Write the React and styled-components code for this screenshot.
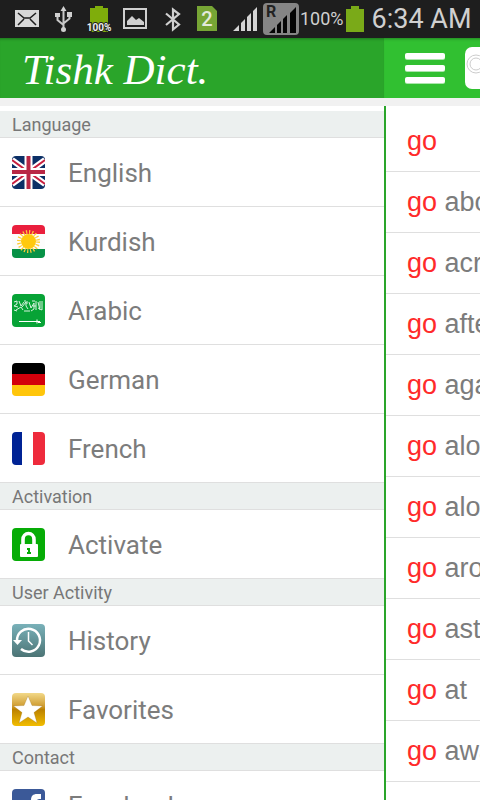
import React from 'react'
import styled, { createGlobalStyle } from 'styled-components'

const sections = [
    {
        title: 'Language',
        items: [
            { label: 'English', icon: 'english' },
            { label: 'Kurdish', icon: 'kurdish' },
            { label: 'Arabic', icon: 'arabic' },
            { label: 'German', icon: 'german' },
            { label: 'French', icon: 'french' },
        ],
    },
    {
        title: 'Activation',
        items: [{ label: 'Activate', icon: 'lock' }],
    },
    {
        title: 'User Activity',
        items: [
            { label: 'History', icon: 'history' },
            { label: 'Favorites', icon: 'star' },
        ],
    },
    {
        title: 'Contact',
        items: [{ label: 'Facebook', icon: 'facebook' }],
    },
]

const words = [
    '',
    'about',
    'across',
    'after',
    'against',
    'alone',
    'along',
    'around',
    'astray',
    'at',
    'away',
]

const artwork = {
    english: (
        <>
            <rect width="33" height="33" fill="#0b2f66" />
            <path d="M0 4 33 28M33 4 0 28" stroke="#fff" strokeWidth="6" />
            <path d="M0 4 33 28M33 4 0 28" stroke="#c8203f" strokeWidth="2" />
            <path d="M16.5 0V33M0 16H33" stroke="#fff" strokeWidth="8" />
            <path d="M16.5 0V33M0 16H33" stroke="#b92745" strokeWidth="4" />
        </>
    ),
    kurdish: (
        <>
            <rect width="33" height="33" fill="#fcfcfc" />
            <rect width="33" height="9" fill="#ea1f3d" />
            <rect y="24" width="33" height="9" fill="#079247" />
            <circle
                cx="16.5"
                cy="16.5"
                r="9.5"
                fill="none"
                stroke="#fc3"
                strokeWidth="4"
                strokeDasharray="1.2 1.8"
            />
            <circle cx="16.5" cy="16.5" r="7.5" fill="#ffc90e" />
        </>
    ),
    arabic: (
        <>
            <rect width="33" height="33" fill="#07a336" />
            <path
                d="M2 8l3-1v3l-3 2 4 1M4 16l5-3 2 3M7 7l2 5 3-4M10 13l4-5v4l2 3M12 7h2M15 7v3M17 8l2 6 3-5v6l-3 2M20 7h3M24 7v9M26 8l2 8M28 7v7M30 7v9l-4-2M2 16l3 1M12 17h6M21 12h3"
                fill="none"
                stroke="#d9f2df"
                strokeWidth="1"
            />
            <path d="M7 27.5H28M25 25.5v4M26 28.5h3" stroke="#fff" fill="none" />
        </>
    ),
    german: (
        <>
            <rect width="33" height="11" />
            <rect y="11" width="33" height="11" fill="#d3000b" />
            <rect y="22" width="33" height="11" fill="#ffc60b" />
        </>
    ),
    french: (
        <>
            <rect width="33" height="33" fill="#fff" />
            <rect width="10" height="33" fill="#002395" />
            <rect x="21" width="12" height="33" fill="#ee2b3c" />
        </>
    ),
    lock: (
        <>
            <rect width="33" height="33" fill="#06ac06" />
            <path
                d="M11 17V11.5a5.5 6 0 0 1 11 0V17"
                fill="none"
                stroke="#fff"
                strokeWidth="3.6"
            />
            <rect x="8" y="16" width="18" height="13" rx="1" fill="#fff" />
            <path d="M15 20h3v4h1v2h-4v-2h1v-2h-1z" fill="#06ac06" />
        </>
    ),
    history: (
        <>
            <defs>
                <linearGradient id="teal" x2="0" y2="1">
                    <stop stopColor="#79b1b9" />
                    <stop offset="1" stopColor="#4c7475" />
                </linearGradient>
            </defs>
            <rect width="33" height="33" fill="url(#teal)" />
            <path
                d="M5 17A11.5 11.5 0 1 1 9 25"
                fill="none"
                stroke="#fff"
                strokeWidth="2.5"
            />
            <path d="M1 16h9l-4.5 5z" fill="#fff" />
            <path d="M16.5 8v9l4 4" fill="none" stroke="#fff" strokeWidth="1.5" />
        </>
    ),
    star: (
        <>
            <defs>
                <linearGradient id="gold" x2="0" y2="1">
                    <stop stopColor="#f2d888" />
                    <stop offset=".4" stopColor="#cf9c30" />
                    <stop offset=".5" stopColor="#bb8100" />
                    <stop offset="1" stopColor="#f2bd00" />
                </linearGradient>
            </defs>
            <rect width="33" height="33" fill="url(#gold)" />
            <path
                d="M16 3l4 9.5 10.5.5-8.5 6.5 3 10.5-9-6-9 6 3-10.5L1.500 13l10.5-.5z"
                fill="#fff"
                stroke="#8f6412"
                strokeOpacity=".4"
                strokeWidth=".6"
            />
        </>
    ),
    facebook: (
        <>
            <rect width="33" height="33" fill="#3b5998" />
            <path
                d="M29 5h-4c-4 0-6 2-6 6v3h-4v5h4v14h6V19h4v-5h-4v-2c0-2 1-2 4-2z"
                fill="#fff"
            />
        </>
    ),
}

function StatusBar() {
    return (
        <Status>
            <StatusIcon viewBox="0 0 36 38">
                <rect x="6" y="10" width="24" height="17" fill="#d8d8d8" />
                <path
                    d="M9 13l6 5h6l6-5M9 25l6-6M27 25l-6-6"
                    fill="none"
                    stroke="#1e1e1e"
                    strokeWidth="1.5"
                />
            </StatusIcon>
            <StatusIcon viewBox="0 0 36 38">
                <path
                    d="M18.5 9v20M12.5 15v5l6 5M24.5 15v3.5l-6 5"
                    fill="none"
                    stroke="#c9c9c9"
                    strokeWidth="2"
                />
                <path
                    d="M18.5 6l3 5h-6zM10 13h5v4h-5zM22 12h5v5h-5z"
                    fill="#d0d0d0"
                />
                <circle cx="18.5" cy="29.5" r="2.5" fill="#d0d0d0" />
            </StatusIcon>
            <StatusIcon viewBox="0 0 36 38">
                <path d="M9 8h5V6h8v2h5v24H9z" fill="#7fad0b" />
                <BatteryText x="18" y="31" textAnchor="middle">
                    100%
                </BatteryText>
            </StatusIcon>
            <StatusIcon viewBox="0 0 36 38">
                <rect
                    x="7"
                    y="9"
                    width="22"
                    height="19"
                    fill="none"
                    stroke="#d0d0d0"
                    strokeWidth="2"
                />
                <path d="M10 25v-4l5-5 4 4 3-2 5 4v3z" fill="#d0d0d0" />
            </StatusIcon>
            <StatusIcon viewBox="0 0 36 38">
                <path
                    d="M13 13.5l13 11-6 5V9.500l6 4.5-13 11"
                    fill="none"
                    stroke="#d0d0d0"
                    strokeWidth="2.2"
                />
            </StatusIcon>
            <StatusIcon viewBox="0 0 36 38">
                <path d="M8 6h15l5 5v20H8z" fill="#77a535" />
                <SimText x="18" y="26" textAnchor="middle">
                    2
                </SimText>
            </StatusIcon>
            <StatusIcon viewBox="0 0 36 38">
                <path
                    d="M8 31l6-6v6zM16 31v-8l4-4v12zM22 31V17l4-4v18zM28 31V11l4-4v24z"
                    fill="#d4d4d4"
                />
            </StatusIcon>
            <StatusIcon viewBox="0 0 36 38">
                <rect x="2" y="3" width="36" height="32" rx="4" fill="#858585" />
                <path
                    d="M8 33l6-6v6zM16 33v-8l4-4v12zM22 33V19l4-4v18zM29 33V13l6-6v26z"
                    fill="#050505"
                />
                <RoamingText x="5" y="17">
                    R
                </RoamingText>
            </StatusIcon>
            <Percent>100%</Percent>
            <BatteryIcon viewBox="0 0 18 26">
                <path d="M0 3h5V0h8v3h5v23H0z" fill="#7aaa18" />
            </BatteryIcon>
            <Clock>6:34 AM</Clock>
        </Status>
    )
}

function App() {
    return (
        <>
            <GlobalStyle />
            <Screen>
                <StatusBar />
                <Columns>
                    <Drawer>
                        <DrawerHeader>
                            <Logo>Tishk Dict.</Logo>
                        </DrawerHeader>
                        <DrawerBody>
                            {sections.map(section => (
                                <section key={section.title}>
                                    <SectionTitle>{section.title}</SectionTitle>
                                    {section.items.map(item => (
                                        <MenuItem key={item.label} href="#">
                                            <MenuIcon viewBox="0 0 33 33">
                                                {artwork[item.icon]}
                                            </MenuIcon>
                                            <MenuLabel>{item.label}</MenuLabel>
                                        </MenuItem>
                                    ))}
                                </section>
                            ))}
                        </DrawerBody>
                    </Drawer>

                    <Page>
                        <PageHeader>
                            <MenuButton aria-label="Menu">
                                <Bar />
                                <Bar />
                                <Bar />
                            </MenuButton>
                            <SearchBox>
                                <SearchIcon viewBox="0 0 24 24">
                                    <circle cx="11" cy="11" r="9" />
                                    <circle cx="11" cy="11" r="6" />
                                    <path d="M18 18l5 5" />
                                </SearchIcon>
                                <SearchInput type="text" aria-label="Search" />
                            </SearchBox>
                        </PageHeader>
                        <WordList>
                            {words.map(word => (
                                <Word key={word}>
                                    <Match>go</Match> {word}
                                </Word>
                            ))}
                        </WordList>
                    </Page>
                </Columns>
            </Screen>
        </>
    )
}

const GlobalStyle = createGlobalStyle`
    * {
        box-sizing: border-box;
    }
    body {
        margin: 0;
        background: #fff;
        font-family: Roboto, 'Liberation Sans', sans-serif;
    }
`

const Screen = styled.div`
    height: 100vh;
    display: flex;
    flex-direction: column;
    overflow: hidden;
`

const Status = styled.div`
    flex: none;
    height: 38px;
    padding-left: 9px;
    display: flex;
    align-items: center;
    background: #1e1e1e;
    color: #d0d0d0;
`

const StatusIcon = styled.svg`
    flex: none;
    width: 36px;
    height: 38px;
    overflow: visible;
`

const BatteryText = styled.text`
    font-size: 10px;
    font-weight: bold;
    fill: #eee;
    stroke: #1e1e1e;
    stroke-width: 2px;
    paint-order: stroke;
`

const SimText = styled.text`
    font-size: 20px;
    font-weight: 500;
    fill: #e4eadb;
`

const RoamingText = styled.text`
    font-size: 16px;
    font-weight: bold;
    fill: #222;
`

const Percent = styled.span`
    padding-left: 3px;
    font-size: 18px;
    line-height: 38px;
`

const BatteryIcon = styled.svg`
    flex: none;
    width: 18px;
    height: 26px;
    margin-left: 2px;
`

const Clock = styled.span`
    padding-left: 8px;
    font-size: 27px;
    line-height: 36px;
    white-space: nowrap;
`

const Columns = styled.div`
    flex: 1;
    min-height: 0;
    display: flex;
    overflow: hidden;
`

const Drawer = styled.nav`
    flex: none;
    width: 80%;
`

const Header = styled.header`
    height: 68px;
    display: flex;
    align-items: center;
    border-bottom: 8px solid #f1f1f1;
    box-shadow: inset 0 3px 3px -2px rgba(0, 0, 0, 0.3);
`

const DrawerHeader = styled(Header)`
    padding-left: 22px;
    background: #2aa52a;
`

const Logo = styled.h1`
    margin: 0;
    padding-top: 4px;
    color: #fff;
    font-family: 'Liberation Serif', serif;
    font-size: 43px;
    font-style: italic;
    font-weight: normal;
    line-height: 56px;
`

const DrawerBody = styled.div`
    padding-top: 5px;
`

const SectionTitle = styled.h2`
    height: 27px;
    margin: 0;
    padding-left: 12px;
    border-bottom: 1px solid #dfdfdf;
    background: #ecf0ef;
    color: #777;
    font-size: 18px;
    font-weight: normal;
    line-height: 27px;
`

const MenuItem = styled.a`
    height: 69px;
    padding-left: 12px;
    display: flex;
    align-items: center;
    gap: 23px;
    border-bottom: 1px solid #dfdfdf;
    color: #7c7c7c;
    font-size: 26px;
    text-decoration: none;
`

const MenuIcon = styled.svg`
    width: 33px;
    height: 33px;
    border-radius: 4px;
`

const MenuLabel = styled.span`
    padding-top: 2px;
    line-height: 32px;
`

const Page = styled.main`
    flex: none;
    width: 100%;
    display: flex;
    flex-direction: column;
`

const PageHeader = styled(Header)`
    flex: none;
    gap: 19px;
    padding: 0 20px;
    background: #31c031;
`

const MenuButton = styled.button`
    width: 42px;
    height: 44px;
    padding: 0 1px;
    border: 0;
    background: none;
    display: flex;
    flex-direction: column;
    align-items: stretch;
    justify-content: center;
    gap: 6px;
`

const Bar = styled.span`
    height: 6px;
    border-radius: 2px;
    background: #fff;
    box-shadow: 0 1px 0 rgba(255, 255, 255, 0.6);
`

const SearchBox = styled.label`
    flex: 1;
    height: 42px;
    display: flex;
    align-items: flex-start;
    padding-top: 6px;
    border-radius: 7px;
    background: #fff;
`

const SearchIcon = styled.svg`
    flex: none;
    width: 24px;
    height: 24px;
    fill: none;
    stroke: #ccc;
`

const SearchInput = styled.input`
    flex: 1;
    height: 30px;
    border: 0;
    background: none;
    font-size: 18px;
`

const WordList = styled.ul`
    flex: 1;
    margin: 0;
    padding: 5px 0 0;
    border-left: 2px solid #2aa52a;
    list-style: none;
`

const Word = styled.li`
    height: 61px;
    padding-left: 21px;
    border-bottom: 1px solid #dfdfdf;
    color: #7c7c7c;
    font-family: 'Liberation Sans', Arial, sans-serif;
    font-size: 27px;
    line-height: 60px;
    white-space: nowrap;
`

const Match = styled.span`
    color: #ff2a2a;
`

export default App
